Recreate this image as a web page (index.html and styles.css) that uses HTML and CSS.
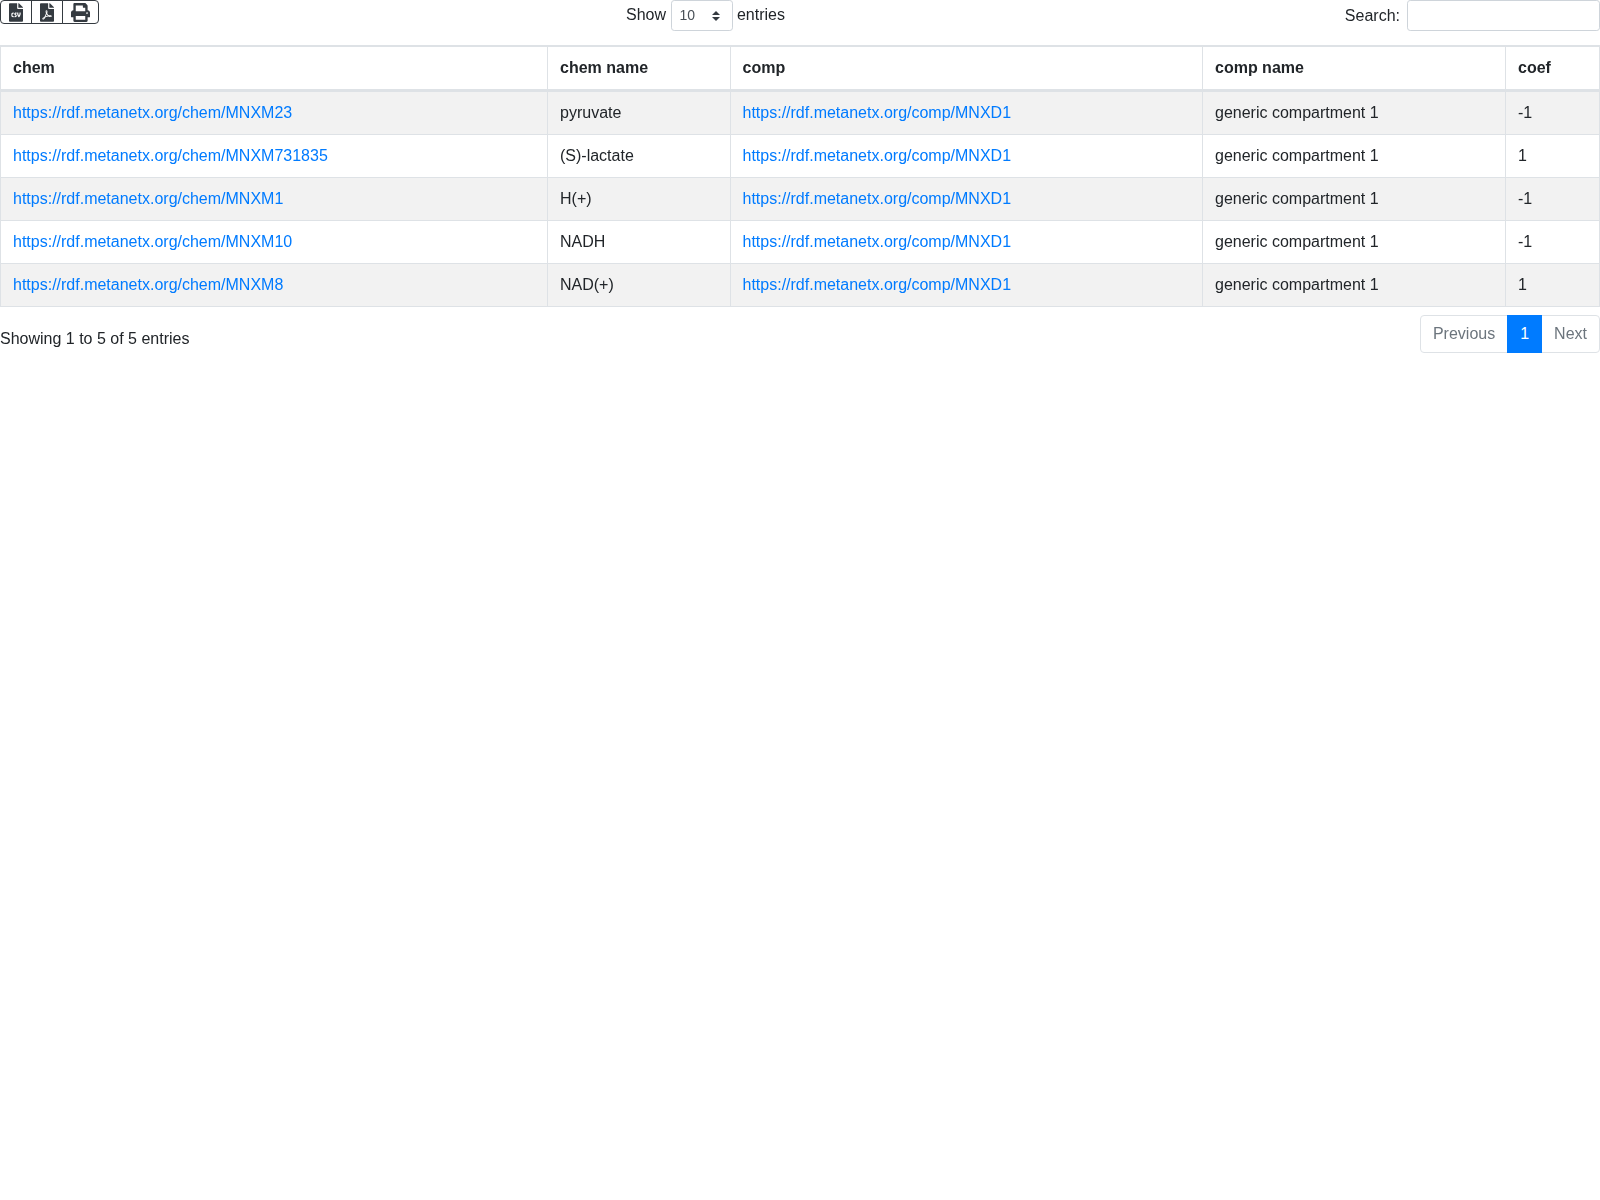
FILE: index.html
```html
<!DOCTYPE html>
<html lang="en">
<head>
<meta charset="utf-8">
<title>Table</title>
<link rel="stylesheet" href="styles.css">
</head>
<body>
<div class="top">
  <div class="btn-group">
    <button class="btn btn-csv" type="button" aria-label="CSV"><svg class="icon-file" viewBox="0 0 384 512"><path d="M224 136V0H24C10.7 0 0 10.7 0 24v464c0 13.3 10.7 24 24 24h336c13.3 0 24-10.7 24-24V160H248c-13.2 0-24-10.8-24-24zm-96 144c0 4.42-3.58 8-8 8h-8c-8.84 0-16 7.16-16 16v32c0 8.84 7.16 16 16 16h8c4.42 0 8 3.58 8 8v16c0 4.42-3.58 8-8 8h-8c-26.51 0-48-21.49-48-48v-32c0-26.51 21.49-48 48-48h8c4.42 0 8 3.58 8 8v16zm44.27 104H160c-4.42 0-8-3.58-8-8v-16c0-4.42 3.58-8 8-8h12.27c5.95 0 10.41-3.5 10.41-6.62 0-1.3-.75-2.66-2.12-3.84l-21.89-18.77c-8.47-7.22-13.33-17.48-13.33-28.14 0-21.3 19.02-38.62 42.41-38.62H200c4.42 0 8 3.58 8 8v16c0 4.42-3.58 8-8 8h-12.27c-5.95 0-10.41 3.5-10.41 6.62 0 1.3.75 2.66 2.12 3.84l21.89 18.77c8.47 7.22 13.33 17.48 13.33 28.14.01 21.29-19 38.62-42.39 38.62zM256 264v20.8c0 20.27 5.7 40.17 16 56.88 10.3-16.7 16-36.61 16-56.88V264c0-4.42 3.58-8 8-8h16c4.42 0 8 3.58 8 8v20.8c0 35.48-12.88 68.89-36.28 94.09-3.02 3.25-7.27 5.11-11.72 5.11s-8.7-1.86-11.72-5.11c-23.4-25.2-36.28-58.61-36.28-94.09V264c0-4.42 3.58-8 8-8h16c4.42 0 8 3.58 8 8zm121-159L279.1 7c-4.5-4.5-10.6-7-17-7H256v128h128v-6.1c0-6.3-2.5-12.4-7-16.9z"/></svg></button>
    <button class="btn btn-pdf" type="button" aria-label="PDF"><svg class="icon-file" viewBox="0 0 384 512"><path d="M181.9 256.1c-5-16-4.9-46.9-2-46.9 8.4 0 7.6 36.9 2 46.9zm-1.7 47.2c-7.7 20.2-17.3 43.3-28.4 62.7 18.3-7 39-17.2 62.9-21.9-12.7-9.6-24.9-23.4-34.5-40.8zM86.1 428.1c0 .8 13.2-5.4 34.9-40.2-6.7 6.3-29.1 24.5-34.9 40.2zM248 160h136v328c0 13.3-10.7 24-24 24H24c-13.3 0-24-10.7-24-24V24C0 10.7 10.7 0 24 0h200v136c0 13.2 10.8 24 24 24zm-8 171.8c-20-12.2-33.3-29-42.7-53.8 4.5-18.5 11.6-46.6 6.2-64.2-4.7-29.4-42.4-26.5-47.8-6.8-5 18.3-.4 44.1 8.1 77-11.6 27.6-28.7 64.6-40.8 85.8-.1 0-.1.1-.2.1-27.1 13.9-73.6 44.5-54.5 68 5.6 6.9 16 10 21.5 10 17.9 0 35.7-18 61.1-61.8 25.8-8.5 54.1-19.1 79-23.2 21.7 11.8 47.1 19.5 64 19.5 29.2 0 31.2-32 19.7-43.4-13.9-13.6-54.3-9.7-73.6-7.2zM377 105L279 7c-4.5-4.5-10.6-7-17-7h-6v128h128v-6.1c0-6.3-2.5-12.4-7-16.9zm-74.1 255.3c4.1-2.7-2.5-11.9-42.8-9 37.1 15.8 42.8 9 42.8 9z"/></svg></button>
    <button class="btn btn-print" type="button" aria-label="Print"><svg class="icon-print" viewBox="0 0 512 512"><path d="M448 192V77.25c0-8.49-3.37-16.62-9.37-22.63L393.37 9.37c-6-6-14.14-9.37-22.63-9.37H96C78.33 0 64 14.33 64 32v160c-35.35 0-64 28.65-64 64v112c0 8.84 7.16 16 16 16h48v96c0 17.67 14.33 32 32 32h320c17.67 0 32-14.33 32-32v-96h48c8.84 0 16-7.16 16-16V256c0-35.35-28.65-64-64-64zm-64 256H128v-96h256v96zm0-224H128V64h192v48c0 8.84 7.16 16 16 16h48v96zm48 72c-13.25 0-24-10.75-24-24 0-13.26 10.75-24 24-24s24 10.74 24 24c0 13.25-10.75 24-24 24z"/></svg></button>
  </div>
  <label class="length">Show <select class="select"><option>10</option><option>25</option><option>50</option><option>100</option></select> entries</label>
  <label class="filter">Search:<input class="search" type="search"></label>
</div>
<table class="data">
  <colgroup>
    <col class="c1"><col class="c2"><col class="c3"><col class="c4"><col class="c5">
  </colgroup>
  <thead>
    <tr><th>chem</th><th>chem name</th><th>comp</th><th>comp name</th><th>coef</th></tr>
  </thead>
  <tbody>
    <tr><td><a href="#">https://rdf.metanetx.org/chem/MNXM23</a></td><td>pyruvate</td><td><a href="#">https://rdf.metanetx.org/comp/MNXD1</a></td><td>generic compartment 1</td><td>-1</td></tr>
    <tr><td><a href="#">https://rdf.metanetx.org/chem/MNXM731835</a></td><td>(S)-lactate</td><td><a href="#">https://rdf.metanetx.org/comp/MNXD1</a></td><td>generic compartment 1</td><td>1</td></tr>
    <tr><td><a href="#">https://rdf.metanetx.org/chem/MNXM1</a></td><td>H(+)</td><td><a href="#">https://rdf.metanetx.org/comp/MNXD1</a></td><td>generic compartment 1</td><td>-1</td></tr>
    <tr><td><a href="#">https://rdf.metanetx.org/chem/MNXM10</a></td><td>NADH</td><td><a href="#">https://rdf.metanetx.org/comp/MNXD1</a></td><td>generic compartment 1</td><td>-1</td></tr>
    <tr><td><a href="#">https://rdf.metanetx.org/chem/MNXM8</a></td><td>NAD(+)</td><td><a href="#">https://rdf.metanetx.org/comp/MNXD1</a></td><td>generic compartment 1</td><td>1</td></tr>
  </tbody>
</table>
<div class="bottom">
  <div class="info">Showing 1 to 5 of 5 entries</div>
  <ul class="pagination">
    <li class="page"><a class="page-link" href="#">Previous</a></li>
    <li class="page active"><a class="page-link" href="#">1</a></li>
    <li class="page"><a class="page-link" href="#">Next</a></li>
  </ul>
</div>
</body>
</html>
```

FILE: styles.css
```css
* { box-sizing: border-box; }
html { background: #fff; }
body {
  margin: 0;
  font-family: "Liberation Sans", Arial, sans-serif;
  font-size: 16px;
  line-height: 1.5;
  color: #212529;
  will-change: opacity;
}
a { color: #007bff; text-decoration: none; }

.top {
  display: flex;
  align-items: flex-start;
  height: 45px;
}
.btn-group { display: flex; }
.btn {
  display: flex;
  align-items: center;
  justify-content: center;
  height: 24px;
  padding: 0 8px;
  margin: 0 0 0 -1px;
  background: #fff;
  border: 1px solid #343a40;
  color: #212529;
}
.btn:first-child { margin-left: 0; border-radius: 4px 0 0 4px; }
.btn:last-child { border-radius: 0 4px 4px 0; }
.icon-file { width: 14px; height: 19px; fill: #343a40; display: block; }
.icon-print { width: 19px; height: 19px; fill: #343a40; display: block; }

.length { margin-left: 527px; white-space: nowrap; line-height: 30px; }
.select {
  width: 62px;
  height: 31px;
  margin: 0 -1px 0 1px;
  padding: 4px 24px 4px 7px;
  font: 14px/1.5 "Liberation Sans", Arial, sans-serif;
  color: #495057;
  vertical-align: middle;
  background: #fff url("data:image/svg+xml,%3csvg xmlns='http://www.w3.org/2000/svg' width='4' height='5' viewBox='0 0 4 5'%3e%3cpath fill='%23343a40' d='M2 0L0 2h4zm0 5L0 3h4z'/%3e%3c/svg%3e") no-repeat right 12px center / 8px 10px;
  border: 1px solid #ced4da;
  border-radius: 3.2px;
  appearance: none;
}
.filter { margin-left: auto; display: flex; align-items: center; white-space: nowrap; }
.search {
  width: 193px;
  height: 31px;
  margin-left: 7px;
  padding: 4px 8px;
  font: 14px/1.5 "Liberation Sans", Arial, sans-serif;
  color: #495057;
  background: #fff;
  border: 1px solid #ced4da;
  border-radius: 3.2px;
  appearance: none;
}

.data {
  width: 100%;
  table-layout: fixed;
  border-collapse: separate;
  border-spacing: 0;
  border: 1px solid #dee2e6;
  border-width: 1px 0 1px 1px;
}
.c1 { width: 547px; }
.c2 { width: 182.5px; }
.c3 { width: 472.5px; }
.c4 { width: 303px; }
.c5 { width: 94px; }
.data th, .data td {
  padding: 9px 12px;
  text-align: left;
  vertical-align: top;
  border: 1px solid #dee2e6;
  border-width: 1px 1px 0 0;
}
.data th { font-weight: 700; border-bottom-width: 2px; }
.data tbody tr:nth-child(odd) { background: #f2f2f2; }

.bottom {
  display: flex;
  justify-content: space-between;
  align-items: flex-start;
  margin-top: 8px;
}
.info { padding-top: 12px; white-space: nowrap; }
.pagination { display: flex; margin: 0; padding: 0; list-style: none; }
.page-link {
  display: block;
  padding: 6px 12px;
  margin-left: -1px;
  color: #6c757d;
  background: #fff;
  border: 1px solid #dee2e6;
}
.page:first-child .page-link { margin-left: 0; border-radius: 4px 0 0 4px; }
.page:last-child .page-link { border-radius: 0 4px 4px 0; }
.active .page-link { color: #fff; background: #007bff; border-color: #007bff; position: relative; }
```
